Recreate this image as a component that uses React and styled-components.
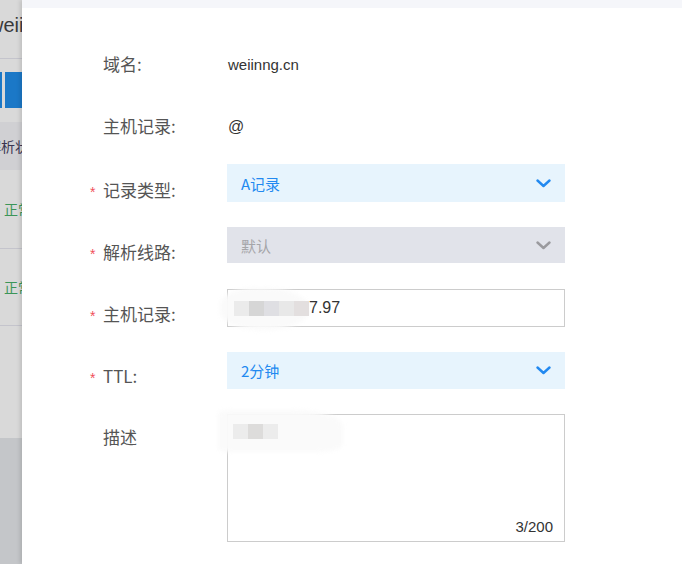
import React from 'react';
import styled, { createGlobalStyle } from 'styled-components';

const GlobalStyle = createGlobalStyle`
  html, body {
    margin: 0;
    padding: 0;
    background: #ffffff;
  }
  body {
    font-family: "Noto Sans CJK SC", "Liberation Sans", sans-serif;
  }
`;

const Page = styled.div`
  display: flex;
  width: 682px;
  height: 564px;
  overflow: hidden;
`;

const Backdrop = styled.div`
  width: 22px;
  flex-shrink: 0;
  display: flex;
  flex-direction: column;
  overflow: hidden;
  background: #d9d9d9;
  white-space: nowrap;
`;

const SiteTitle = styled.div`
  height: 58px;
  border-bottom: 1px solid #c4c4cc;
  margin-left: -11px;
  font-family: "Liberation Sans", sans-serif;
  font-size: 20px;
  line-height: 50px;
  color: #3a3a3a;
`;

const ButtonBar = styled.div`
  display: flex;
  gap: 3px;
  margin-top: 13px;
  height: 36px;
`;

const BlueButton = styled.div`
  width: ${({ w }) => w}px;
  flex-shrink: 0;
  background: #1b78c7;
  color: #e8f2fb;
  font-size: 12px;
  line-height: 36px;
  text-align: right;
`;

const HeadCell = styled.div`
  margin-top: 14px;
  height: 48px;
  background: #d0d0d3;
  font-size: 14px;
  line-height: 48px;
  color: #3a3550;
  padding-left: 0;
  text-indent: -13px;
`;

const DataRow = styled.div`
  height: ${({ h }) => h}px;
  border-bottom: 1px solid #c4c4cc;
  display: flex;
  align-items: center;
  padding-left: 4px;
  font-size: 14px;
  color: #3b9558;
`;

const Filler = styled.div`
  height: 112px;
`;

const DarkFiller = styled.div`
  flex: 1;
  background: #c4c6c9;
`;

const Modal = styled.div`
  flex: 1;
  background: #ffffff;
  box-shadow: -2px 0 4px rgba(0, 0, 0, 0.12);
  display: flex;
  flex-direction: column;
`;

const TopBand = styled.div`
  height: 8px;
  background: #f5f6fa;
`;

const Form = styled.div`
  padding: 26px 0 0 68px;
  display: flex;
  flex-direction: column;
`;

const Row = styled.div`
  display: grid;
  grid-template-columns: 137px 338px;
  align-items: start;
  height: ${({ h }) => h || 62}px;
`;

const Label = styled.div`
  display: flex;
  align-items: center;
  margin-top: ${({ top }) => (top === undefined ? 18 : top)}px;
  font-size: 17px;
  line-height: 24px;
  color: #555;
`;

const Star = styled.span`
  width: 13px;
  padding-top: 4px;
  color: #f0505a;
  font-family: "Liberation Sans", sans-serif;
  font-size: 14px;
`;

const Value = styled.div`
  margin-top: 19px;
  font-family: "Liberation Sans", sans-serif;
  font-size: ${({ size }) => size || 15}px;
  line-height: 24px;
  color: #333;
  padding-left: 1px;
`;

const SelectBox = styled.div`
  margin-top: ${({ top }) => top || 6}px;
  height: ${({ h }) => h || 38}px;
  box-sizing: border-box;
  display: flex;
  align-items: center;
  justify-content: space-between;
  padding: 0 14px;
  background: ${({ disabled }) => (disabled ? '#e1e3ea' : '#e7f4fd')};
  color: ${({ disabled }) => (disabled ? '#a5a5a8' : '#2289f0')};
  font-size: 15px;
`;

const Chevron = ({ color }) => (
  <svg width="15" height="9" viewBox="0 0 15 9">
    <path
      d="M1.5 1.5 L7.5 7 L13.5 1.5"
      fill="none"
      stroke={color}
      strokeWidth="2.4"
      strokeLinecap="round"
      strokeLinejoin="round"
    />
  </svg>
);

const Field = styled.div`
  position: relative;
  margin-top: ${({ top }) => top}px;
  height: ${({ h }) => h}px;
  box-sizing: border-box;
  border: 1px solid #cccccc;
  background: #fff;
`;

const InputText = styled.div`
  position: relative;
  display: flex;
  align-items: center;
  height: 100%;
  padding-left: 6px;
  font-family: "Liberation Sans", sans-serif;
  font-size: 16px;
  color: #333;
`;

const Mosaic = styled.div`
  display: flex;
`;

const Tile = styled.span`
  width: 15px;
  height: 15px;
  background: ${({ c }) => c};
`;

const Smudge = styled.div`
  position: absolute;
  left: ${({ x }) => x}px;
  top: ${({ y }) => y}px;
  width: ${({ w }) => w}px;
  height: ${({ h }) => h}px;
  background: rgba(250, 250, 250, 0.95);
  border-radius: ${({ r }) => r};
  filter: blur(2px);
`;

const MosaicSpot = styled.div`
  position: absolute;
  left: ${({ x }) => x}px;
  top: ${({ y }) => y}px;
`;

const Counter = styled.div`
  position: absolute;
  right: 11px;
  bottom: 6px;
  font-family: "Liberation Sans", sans-serif;
  font-size: 15px;
  color: #333;
`;

const App = () => (
  <>
    <GlobalStyle />
    <Page>
      <Backdrop>
        <SiteTitle>weiinng.cn</SiteTitle>
        <ButtonBar>
          <BlueButton w={2} />
          <BlueButton w={30}>+</BlueButton>
        </ButtonBar>
        <HeadCell>解析状态</HeadCell>
        <DataRow h={78}>正常</DataRow>
        <DataRow h={76}>正常</DataRow>
        <Filler />
        <DarkFiller />
      </Backdrop>

      <Modal>
        <TopBand />
        <Form>
          <Row>
            <Label>
              <Star />
              域名:
            </Label>
            <Value>weiinng.cn</Value>
          </Row>
          <Row>
            <Label>
              <Star />
              主机记录:
            </Label>
            <Value size={16}>@</Value>
          </Row>
          <Row>
            <Label>
              <Star>*</Star>
              记录类型:
            </Label>
            <SelectBox>
              A记录
              <Chevron color="#2289f0" />
            </SelectBox>
          </Row>
          <Row>
            <Label>
              <Star>*</Star>
              解析线路:
            </Label>
            <SelectBox disabled h={36} top={7}>
              默认
              <Chevron color="#9a9a9e" />
            </SelectBox>
          </Row>
          <Row>
            <Label>
              <Star>*</Star>
              主机记录:
            </Label>
            <Field top={7} h={38}>
              <Smudge x={-8} y={-2} w={90} h={42} r="40% 50% 50% 45%" />
              <InputText>
                <Mosaic>
                  <Tile c="#ebebeb" />
                  <Tile c="#d6d6d6" />
                  <Tile c="#dfdfe3" />
                  <Tile c="#e8e8e8" />
                  <Tile c="#e3dfdf" />
                </Mosaic>
                7.97
              </InputText>
            </Field>
          </Row>
          <Row>
            <Label>
              <Star>*</Star>
              TTL:
            </Label>
            <SelectBox h={37} top={8}>
              2分钟
              <Chevron color="#2289f0" />
            </SelectBox>
          </Row>
          <Row h={140}>
            <Label top={19}>
              <Star />
              描述
            </Label>
            <Field top={8} h={128}>
              <Smudge x={-10} y={-5} w={125} h={42} r="10% 40% 20% 10%" />
              <MosaicSpot x={5} y={9}>
                <Mosaic>
                  <Tile c="#ececec" />
                  <Tile c="#dddcdb" />
                  <Tile c="#ececec" />
                </Mosaic>
              </MosaicSpot>
              <Counter>3/200</Counter>
            </Field>
          </Row>
        </Form>
      </Modal>
    </Page>
  </>
);

export default App;
